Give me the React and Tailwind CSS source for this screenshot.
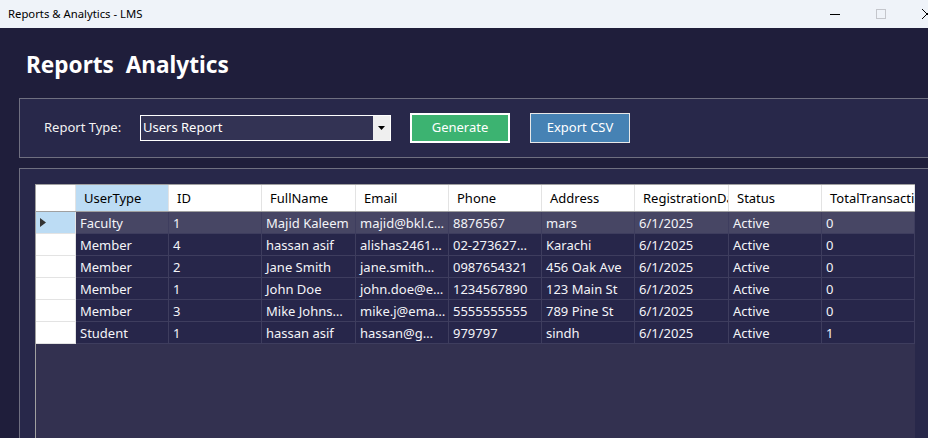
import React from "react";

const cols = [
  { name: "UserType", w: 93 },
  { name: "ID", w: 93 },
  { name: "FullName", w: 94 },
  { name: "Email", w: 93 },
  { name: "Phone", w: 93 },
  { name: "Address", w: 93 },
  { name: "RegistrationDate", w: 94 },
  { name: "Status", w: 93 },
  { name: "TotalTransactions", w: 93 },
];

const rows = [
  ["Faculty", "1", "Majid Kaleem", "majid@bkl.c…", "8876567", "mars", "6/1/2025", "Active", "0"],
  ["Member", "4", "hassan asif", "alishas2461…", "02-273627…", "Karachi", "6/1/2025", "Active", "0"],
  ["Member", "2", "Jane Smith", "jane.smith…", "0987654321", "456 Oak Ave", "6/1/2025", "Active", "0"],
  ["Member", "1", "John Doe", "john.doe@e…", "1234567890", "123 Main St", "6/1/2025", "Active", "0"],
  ["Member", "3", "Mike Johns…", "mike.j@ema…", "5555555555", "789 Pine St", "6/1/2025", "Active", "0"],
  ["Student", "1", "hassan asif", "hassan@g…", "979797", "sindh", "6/1/2025", "Active", "1"],
];

export default function App() {
  return (
    <div className="w-[928px] h-[438px] overflow-hidden flex flex-col font-['Noto_Sans',sans-serif]">
      {/* Title bar */}
      <div className="h-[28px] shrink-0 bg-[#eff3f9] flex items-center justify-between">
        <span className="pl-[8px] text-[11.3px] text-black">Reports &amp; Analytics - LMS</span>
        <div className="flex items-center h-full">
          <div className="w-[46px] h-full flex items-center justify-center">
            <div className="w-[10px] h-px bg-black" />
          </div>
          <div className="w-[46px] h-full flex items-center justify-center">
            <div className="w-[10px] h-[10px] border border-[#c4c6cc]" />
          </div>
          <div className="w-[24px] h-full flex items-center overflow-hidden">
            <svg width="12" height="12" viewBox="0 0 12 12" className="shrink-0 ml-[17px]">
              <path d="M1 1L11 11M11 1L1 11" stroke="#000" strokeWidth="1" />
            </svg>
          </div>
        </div>
      </div>

      {/* Body */}
      <div className="flex-1 bg-[#1f1e3b] flex flex-col pl-[19px] min-h-0">
        <div className="h-[70px] shrink-0 flex items-center pl-[7px] pt-[4px]">
          <h1 className="text-[22.6px] font-bold text-white leading-none whitespace-pre">Reports  Analytics</h1>
        </div>

        {/* Panel 1 */}
        <div className="h-[60px] shrink-0 bg-[#28284a] border border-r-0 border-[#6f6f80] flex items-center">
          <span className="ml-[24px] w-[96px] text-[13px] text-[#f2f2f2]">Report Type:</span>
          <div className="w-[251px] h-[26px] border border-white flex bg-[#333354] mt-[-1px]">
            <div className="flex-1 flex items-center pl-[2px] pt-[1px] text-[13px] text-white">Users Report</div>
            <div className="w-[17px] bg-[#efefef] flex items-center justify-center">
              <svg width="7" height="4" viewBox="0 0 7 4">
                <path d="M0 0H7L3.5 4Z" fill="#000" />
              </svg>
            </div>
          </div>
          <button className="ml-[19px] w-[100px] h-[30px] bg-[#3cb371] border-2 border-white text-white text-[13px] flex items-center justify-center">
            Generate
          </button>
          <button className="ml-[20px] w-[100px] h-[30px] bg-[#4682b4] border border-[#e8e8e8] text-white text-[13px] flex items-center justify-center">
            Export CSV
          </button>
        </div>

        {/* Panel 2 */}
        <div className="mt-[10px] flex-1 bg-[#28284a] border border-r-0 border-b-0 border-[#6f6f80] pl-[15px] pt-[15px] min-h-0 flex">
          <div className="w-[880px] h-full bg-[#333150] border-t border-l border-[#a0a0a0] flex flex-col">
            {/* Header */}
            <div className="flex h-[27px] shrink-0 bg-white border-b border-[#a0a0a0]">
              <div className="w-[40px] shrink-0 border-r border-[#e3e3e3]" />
              {cols.map((c, i) => (
                <div
                  key={c.name}
                  style={{ width: c.w }}
                  className={
                    "shrink-0 flex items-center pl-[8px] pt-[1px] overflow-hidden whitespace-nowrap text-[13px] text-black border-r border-[#e3e3e3] " +
                    (i === 0 ? "bg-[#bcdcf4]" : "bg-white")
                  }
                >
                  {c.name}
                </div>
              ))}
            </div>
            {/* Rows */}
            {rows.map((r, ri) => (
              <div key={ri} className="flex h-[22px] shrink-0">
                <div
                  className={
                    "w-[40px] shrink-0 border-r border-b border-[#e3e3e3] flex items-center pl-[4px] " +
                    (ri === 0 ? "bg-[#bcdcf4]" : "bg-white")
                  }
                >
                  {ri === 0 && (
                    <svg width="6" height="9" viewBox="0 0 6 9">
                      <path d="M0 0L6 4.5L0 9Z" fill="#333" />
                    </svg>
                  )}
                </div>
                {r.map((v, ci) => (
                  <div
                    key={ci}
                    style={{ width: cols[ci].w }}
                    className={
                      "shrink-0 flex items-center pl-[4px] pt-[2px] overflow-hidden whitespace-nowrap text-[13px] text-[#f4f4f8] border-r border-b border-[#3e3d5e] " +
                      (ri === 0 ? "bg-[#474664]" : "bg-[#27264a]")
                    }
                  >
                    {v}
                  </div>
                ))}
              </div>
            ))}
          </div>
        </div>
      </div>
    </div>
  );
}
